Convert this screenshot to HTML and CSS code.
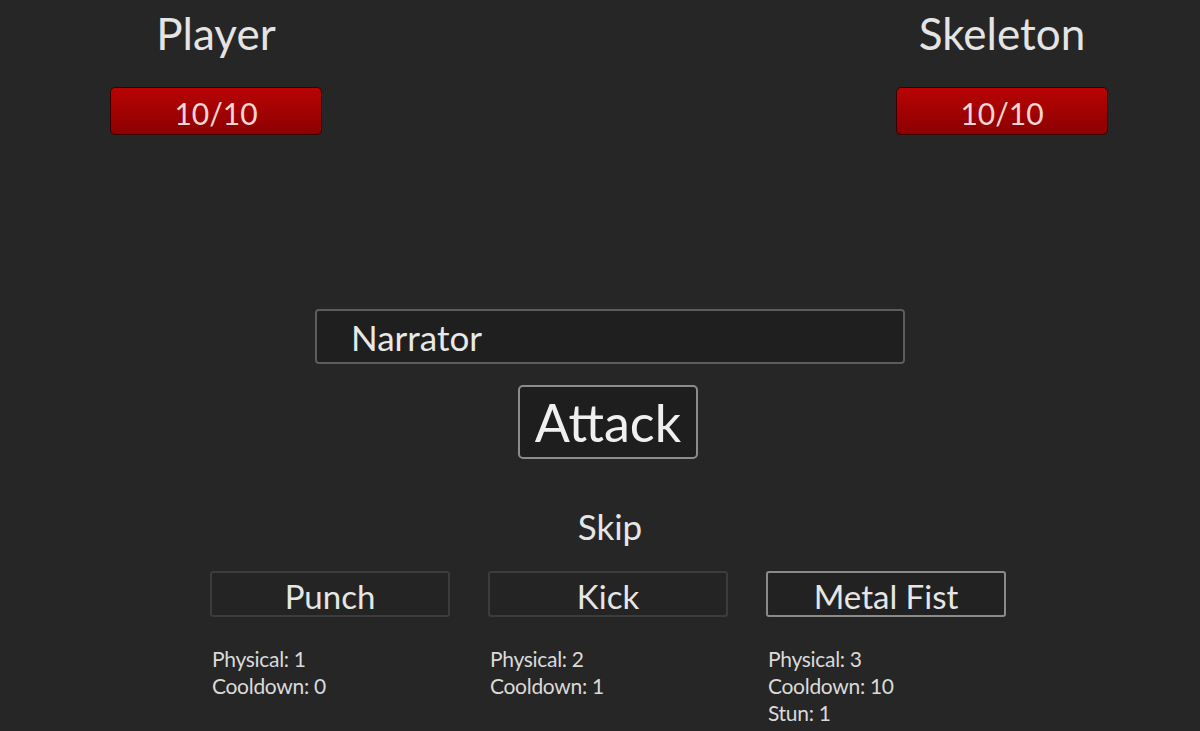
FILE: index.html
```html
<!DOCTYPE html>
<html lang="en">
<head>
    <meta charset="UTF-8">
    <title>Battle</title>
    <link rel="stylesheet" href="styles.css">
</head>
<body>
    <div class="screen">
        <div class="fighters">
            <div class="fighter">
                <div class="name">Player</div>
                <div class="health">10/10</div>
            </div>
            <div class="fighter">
                <div class="name">Skeleton</div>
                <div class="health">10/10</div>
            </div>
        </div>

        <div class="center">
            <div class="narrator">Narrator</div>
            <button class="attack">Attack</button>
            <div class="skip">Skip</div>
        </div>

        <div class="skills">
            <div class="skill">
                <button class="skill-btn">Punch</button>
                <div class="stats">
                    <div>Physical: 1</div>
                    <div>Cooldown: 0</div>
                </div>
            </div>
            <div class="skill">
                <button class="skill-btn">Kick</button>
                <div class="stats">
                    <div>Physical: 2</div>
                    <div>Cooldown: 1</div>
                </div>
            </div>
            <div class="skill">
                <button class="skill-btn selected">Metal Fist</button>
                <div class="stats">
                    <div>Physical: 3</div>
                    <div>Cooldown: 10</div>
                    <div>Stun: 1</div>
                </div>
            </div>
        </div>
    </div>
</body>
</html>
```

FILE: styles.css
```css
* {box-sizing: border-box;}
html, body {
    margin: 0;
    height: 100%;
    background: #262626;
}
body {
    font-family: "Lato", "Open Sans", sans-serif;
    color: #e6e6e6;
    overflow: hidden;
}
.screen {
    width: 1200px;
    height: 731px;
}
.fighters {
    display: flex;
    justify-content: space-between;
    padding: 6px 92px 0 110px;
}
.fighter {
    width: 212px;
    display: flex;
    flex-direction: column;
    align-items: center;
}
.fighter .name {
    font-size: 44px;
    line-height: 54px;
    color: #e4e4e4;
}
.health {
    margin-top: 27px;
    width: 100%;
    height: 48px;
    border-radius: 5px;
    border: 1px solid #3a0000;
    background: linear-gradient(#b80404, #8c0000);
    color: #f3d6d6;
    font-size: 30px;
    line-height: 50px;
    text-align: center;
}
.center {
    display: flex;
    flex-direction: column;
    align-items: center;
    margin-top: 174px;
    padding-left: 20px;
}
.narrator {
    width: 590px;
    height: 55px;
    background: #1f1f1f;
    border: 2px solid #5c5c5c;
    border-radius: 4px;
    padding-left: 34px;
    font-size: 35px;
    line-height: 52px;
    color: #e8e8e8;
}
.attack {
    margin: 21px 4px 0 0;
    width: 180px;
    height: 74px;
    background: #1e1e1e;
    border: 2px solid #8c8c8c;
    border-radius: 5px;
    font-family: inherit;
    font-size: 52px;
    line-height: 68px;
    color: #f0f0f0;
    padding: 0;
}
.skip {
    margin-top: 46px;
    font-size: 35px;
    line-height: 42px;
    color: #e6e6e6;
}
.skills {
    display: grid;
    grid-template-columns: repeat(3, 240px);
    column-gap: 38px;
    padding-left: 210px;
    margin-top: 24px;
}
.skill-btn {
    width: 240px;
    height: 46px;
    background: #242424;
    border: 2px solid #3c3c3c;
    border-radius: 3px;
    font-family: inherit;
    font-size: 33px;
    line-height: 46px;
    color: #e6e6e6;
    padding: 0;
}
.skill-btn.selected {
    border-color: #8a8a8a;
    background: #222222;
}
.stats {
    margin-top: 28px;
    padding-left: 2px;
    font-size: 21px;
    line-height: 27px;
    color: #dadada;
    letter-spacing: -0.3px;
}
```
